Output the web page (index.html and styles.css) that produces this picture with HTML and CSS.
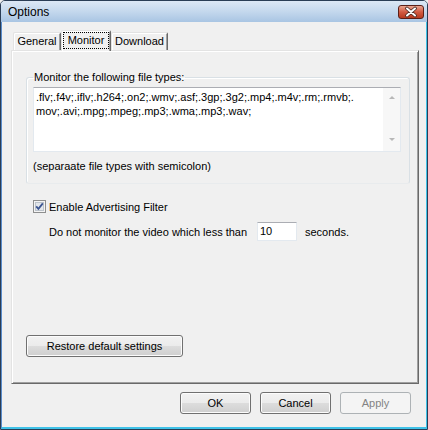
FILE: index.html
```html
<!DOCTYPE html>
<html lang="en">

<head>
    <meta charset="UTF-8">
    <meta name="viewport" content="width=device-width, initial-scale=1.0">
    <title>Options</title>
    <link rel="stylesheet" href="styles.css">
</head>

<body>
    <div class="window">
        <div class="titlebar">
            <span class="title">Options</span>
            <button class="close">
                <svg width="24" height="12" viewBox="0 0 24 12">
                    <path d="M8 2.5 L16 9.5 M16 2.5 L8 9.5" stroke="#4a2a24" stroke-width="3.6" stroke-linecap="round" />
                    <path d="M8 2.5 L16 9.5 M16 2.5 L8 9.5" stroke="#fff" stroke-width="2" stroke-linecap="round" />
                </svg>
            </button>
        </div>

        <div class="client">
            <ul class="tabs">
                <li class="tab tab-general">General</li>
                <li class="tab tab-monitor active"><span class="focus">Monitor</span></li>
                <li class="tab tab-download">Download</li>
            </ul>

            <div class="page">
                <fieldset class="group">
                    <legend>Monitor the following file types:</legend>
                    <div class="textbox">
                        <div class="text">.flv;.f4v;.iflv;.h264;.on2;.wmv;.asf;.3gp;.3g2;.mp4;.m4v;.rm;.rmvb;.<br>mov;.avi;.mpg;.mpeg;.mp3;.wma;.mp3;.wav;</div>
                        <div class="scrollbar">
                            <span class="arrow up"></span>
                            <span class="arrow down"></span>
                        </div>
                    </div>
                    <p class="hint">(separaate file types with semicolon)</p>
                </fieldset>

                <div class="check-row">
                    <svg class="checkbox" width="13" height="13" viewBox="0 0 13 13">
                        <rect x="0.5" y="0.5" width="12" height="12" fill="#f4f4f4" stroke="#8e8f8f" />
                        <rect x="2.5" y="2.5" width="8" height="8" fill="#e2e6eb" stroke="#bcc3cb" />
                        <path d="M3.2 6.3 L5.4 8.8 L9.8 3.4" fill="none" stroke="#3b5592" stroke-width="1.8" />
                    </svg>
                    <span>Enable Advertising Filter</span>
                </div>

                <div class="seconds-row">
                    <span class="seconds-label">Do not monitor the video which less than</span>
                    <span class="num">10</span>
                    <span class="unit">seconds.</span>
                </div>

                <button class="btn restore">Restore default settings</button>
            </div>

            <div class="actions">
                <button class="btn">OK</button>
                <button class="btn">Cancel</button>
                <button class="btn" disabled>Apply</button>
            </div>
        </div>
    </div>
</body>

</html>
```

FILE: styles.css
```css
* {
    box-sizing: border-box;
    margin: 0;
    padding: 0;
}

body {
    width: 428px;
    height: 430px;
    overflow: hidden;
    font-family: "Liberation Sans", Arial, sans-serif;
    font-size: 11px;
    color: #000;
    background: #f0f0f0;
}

.window {
    width: 428px;
    height: 430px;
    border: 1px solid #2a3d55;
    border-radius: 5px 5px 0 0;
    display: flex;
    flex-direction: column;
    overflow: hidden;
}

/* title bar */
.titlebar {
    height: 21px;
    flex: none;
    display: flex;
    align-items: center;
    justify-content: space-between;
    padding: 0 3px 0 7px;
    background: linear-gradient(#dce8f5, #c4d8ed 50%, #a9c5e3);
}

.title {
    font-size: 12px;
}

.close {
    width: 26px;
    height: 14px;
    display: flex;
    align-items: center;
    justify-content: center;
    border: 1px solid #5b1f17;
    border-radius: 3px;
    background: linear-gradient(#e9a590, #d25a42 50%, #b7391f);
}

.client {
    flex: 1;
    display: flex;
    flex-direction: column;
    padding: 8px 7px 0 9px;
    border-left: 1px solid #5a8dcc;
    border-right: 1px solid #3fc2e8;
    border-bottom: 2px solid #3fc2e8;
    background: #f0f0f0;
}

/* tabs */
.tabs {
    display: flex;
    list-style: none;
    padding-left: 2px;
    height: 20px;
}

.tab {
    height: 18px;
    margin-top: 2px;
    line-height: 16px;
    text-align: center;
    border: 1px solid;
    border-color: #e3e3e3 #696969 transparent #e3e3e3;
    border-bottom: none;
    border-radius: 2px 2px 0 0;
    box-shadow: inset 1px 1px #fff, inset -1px 0 #a0a0a0;
}

.tab-general {
    width: 48px;
}

.tab-monitor {
    width: 50px;
}

.tab-download {
    width: 57px;
}

.tab.active {
    height: 21px;
    margin-top: 0;
    position: relative;
    z-index: 1;
    background: #f0f0f0;
}

.focus {
    display: block;
    height: 17px;
    margin: 1px 1px 0;
    line-height: 15px;
    border: 1px dotted #000;
}

/* tab page */
.page {
    height: 334px;
    display: flex;
    flex-direction: column;
    padding: 20px 8px 26px 14px;
    border: 1px solid;
    border-color: #e3e3e3 #696969 #696969 #e3e3e3;
    box-shadow: inset 1px 1px #fff, inset -1px -1px #a0a0a0;
}

.group {
    padding: 3px 8px 10px 6px;
    border: 1px solid #d9e0e5;
    border-bottom-color: #e8ebed;
    border-radius: 3px;
    box-shadow: inset 1px 1px #fff;
    min-width: 0;
}

.group legend {
    padding: 0 1px;
    line-height: 13px;
}

.textbox {
    height: 65px;
    display: flex;
    background: #fff;
    border: 1px solid #e3e9ef;
    border-top-color: #abadb3;
}

.text {
    flex: 1;
    padding: 2px;
    line-height: 14px;
    white-space: nowrap;
    overflow: hidden;
}

.scrollbar {
    width: 17px;
    display: flex;
    flex-direction: column;
    align-items: center;
    justify-content: space-between;
    padding: 8px 0 10px;
    background: #f7f7f7;
}

.arrow {
    width: 0;
    height: 0;
    border-left: 3px solid transparent;
    border-right: 3px solid transparent;
}

.arrow.up {
    border-bottom: 3px solid #b8b8b8;
}

.arrow.down {
    border-top: 3px solid #b8b8b8;
}

.hint {
    margin-top: 8px;
    line-height: 13px;
}

.check-row {
    display: flex;
    align-items: center;
    gap: 3px;
    height: 13px;
    margin-top: 16px;
    padding-left: 7px;
}

.seconds-row {
    display: flex;
    align-items: center;
    height: 19px;
    margin-top: 9px;
    padding-left: 23px;
}

.seconds-label {
    width: 208px;
}

.num {
    width: 40px;
    height: 19px;
    line-height: 17px;
    padding-left: 2px;
    background: #fff;
    border: 1px solid #e3e9ef;
    border-top-color: #abadb3;
}

.unit {
    margin-left: 8px;
}

/* buttons */
.btn {
    height: 22px;
    width: 71px;
    font: inherit;
    color: #000;
    border: 1px solid #707070;
    border-radius: 3px;
    background: linear-gradient(#f2f2f2, #ebebeb 50%, #dddddd 50%, #cfcfcf);
    box-shadow: inset 0 0 0 1px #fcfcfc;
}

.btn:disabled {
    color: #838383;
    border-color: #adb2b5;
    background: #f4f4f4;
    box-shadow: none;
}

.restore {
    width: 157px;
    margin-top: auto;
}

.actions {
    display: flex;
    justify-content: flex-end;
    gap: 9px;
    margin-top: 8px;
    padding-right: 8px;
}
```
